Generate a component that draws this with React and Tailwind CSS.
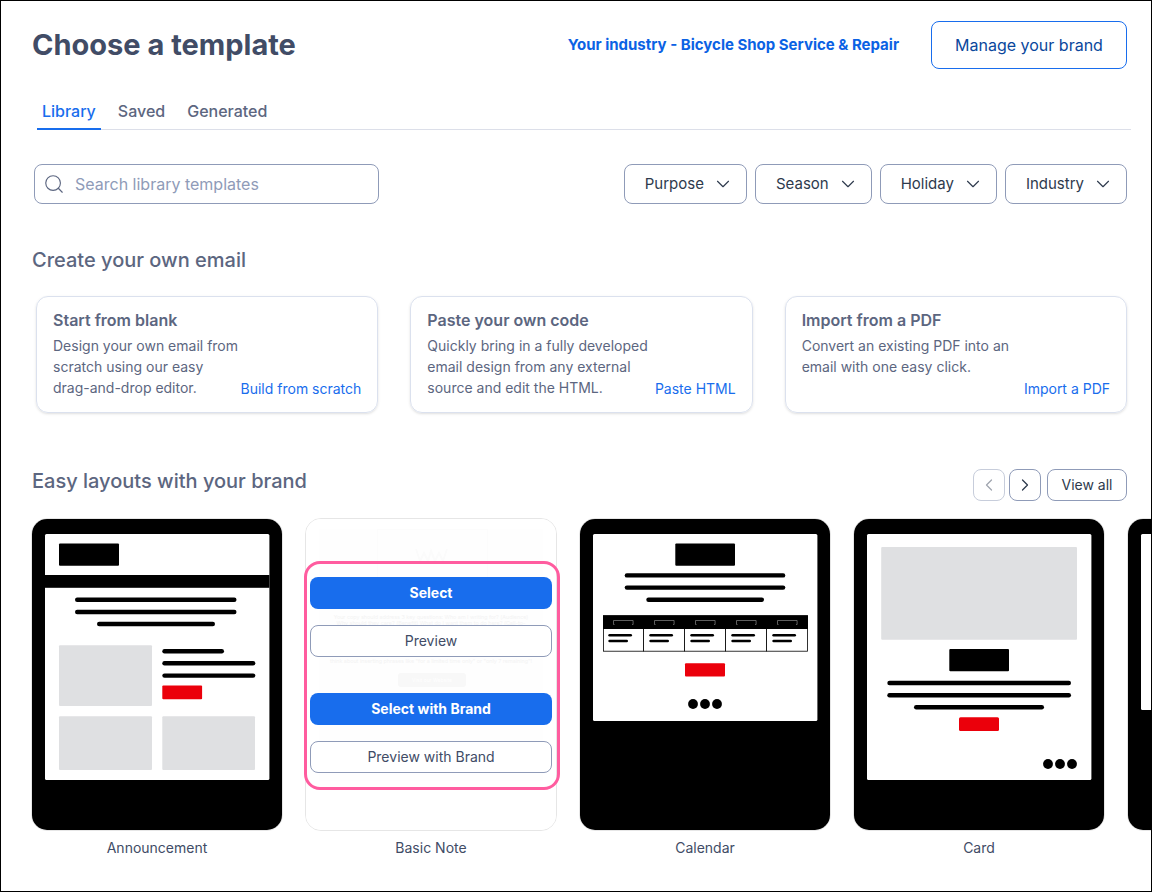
import React from 'react'
import { Search, ChevronDown, ChevronLeft, ChevronRight } from 'lucide-react'

const tabs = ['Library', 'Saved', 'Generated']
const filters = ['Purpose', 'Season', 'Holiday', 'Industry']

const starters = [
  {
    title: 'Start from blank',
    lines: ['Design your own email from', 'scratch using our easy', 'drag-and-drop editor.'],
    action: 'Build from scratch',
  },
  {
    title: 'Paste your own code',
    lines: ['Quickly bring in a fully developed', 'email design from any external', 'source and edit the HTML.'],
    action: 'Paste HTML',
  },
  {
    title: 'Import from a PDF',
    lines: ['Convert an existing PDF into an', 'email with one easy click.'],
    action: 'Import a PDF',
  },
]

const Line = ({ x1, x2, y, w = 4.4 }) => (
  <line x1={x1 + w / 2} x2={x2 - w / 2} y1={y} y2={y} stroke="#000" strokeWidth={w} strokeLinecap="round" />
)

const Frame = ({ bottom, children }) => (
  <svg viewBox="0 0 250 311" className="block w-full h-auto bg-black" aria-hidden="true">
    <rect x="13" y="15" width="224.4" height={bottom - 15} rx="1.5" fill="#fff" />
    {children}
  </svg>
)

const AnnouncementArt = () => (
  <Frame bottom={261}>
    <rect x="27" y="24.4" width="60" height="22.3" rx="1" />
    <rect x="13" y="56" width="224.4" height="12.8" />
    <Line x1={43} x2={204.5} y={80.7} />
    <Line x1={43} x2={204.5} y={93} />
    <Line x1={65} x2={183} y={105} />
    <rect x="27" y="126.3" width="93" height="60.6" rx="1" fill="#dfe0e2" />
    <Line x1={130.3} x2={192} y={132.3} />
    <Line x1={130.3} x2={223.3} y={144.3} />
    <Line x1={130.3} x2={223.3} y={156.6} />
    <rect x="130.3" y="166.6" width="39.8" height="13.6" rx="1" fill="#eb000b" />
    <rect x="27" y="197.3" width="93" height="53.7" rx="1" fill="#dfe0e2" />
    <rect x="130.3" y="197.3" width="92.7" height="53.7" rx="1" fill="#dfe0e2" />
  </Frame>
)

const CalendarArt = () => (
  <Frame bottom={202}>
    <rect x="95.3" y="24.4" width="59.7" height="22.3" rx="1" />
    <Line x1={44.7} x2={205.3} y={56.4} />
    <Line x1={44.7} x2={205.3} y={68.6} />
    <Line x1={66.3} x2={184} y={80.8} />
    <rect x="23.5" y="96.8" width="204" height="35.4" fill="#fff" stroke="#000" strokeWidth="0.8" />
    <rect x="23" y="96.3" width="205" height="13.7" />
    {[0, 41, 82, 123, 164].map(dx => (
      <g key={dx} transform={`translate(${dx} 0)`}>
        <path d="M34.5 105.5h-1v-4h19.6v4h-1" fill="none" stroke="#888" strokeWidth="0.7" />
        {dx > 0 && <path d="M22.5 110v22.4" stroke="#000" strokeWidth="0.9" />}
        <Line x1={28.3} x2={52} y={116.3} w={2.6} />
        <Line x1={28.3} x2={48} y={122} w={2.6} />
      </g>
    ))}
    <rect x="105" y="144.3" width="40" height="13.3" rx="1" fill="#eb000b" />
    <circle cx="113" cy="185" r="4.9" />
    <circle cx="125" cy="185" r="4.9" />
    <circle cx="137" cy="185" r="4.9" />
  </Frame>
)

const CardArt = () => (
  <Frame bottom={261}>
    <rect x="27.2" y="28" width="195.8" height="92.7" rx="1" fill="#dfe0e2" />
    <rect x="95.3" y="130" width="59.7" height="22.3" rx="1" />
    <Line x1={33.3} x2={217} y={164} />
    <Line x1={33.3} x2={217} y={176.3} />
    <Line x1={60} x2={190} y={188.3} />
    <rect x="105" y="198.3" width="40" height="13.6" rx="1.5" fill="#eb000b" />
    <circle cx="194" cy="245" r="4.9" />
    <circle cx="206" cy="245" r="4.9" />
    <circle cx="218" cy="245" r="4.9" />
  </Frame>
)

// Washed out while the action overlay is open
const NoteArt = () => (
  <svg viewBox="0 0 250 311" className="block w-full h-auto bg-white" aria-hidden="true">
    <rect x="13" y="10" width="224" height="252" fill="#fefefe" />
    <rect x="71.5" y="10.5" width="110" height="60" fill="none" stroke="#fcfcfc" />
    <path d="M110 30l4 12 4-8 4 8 3-10 4 10 4-8 4 8 4-12" fill="none" stroke="#fbfbfb" strokeWidth="2" />
    <g fill="#f3f3f3" fontSize="5.4" textAnchor="middle">
      <text x="125" y="99.5">Your copy should address 3 key questions: Who am I writing for? (Audience)</text>
      <text x="125" y="106">Why should they care? (Benefit) What do I want them to do here? (Call-to-</text>
      <text x="125" y="144">think about inserting phrases like "for a limited time only" or "only 7 remaining"!</text>
    </g>
    <rect x="92" y="154" width="68" height="14" rx="3" fill="#f8f8f8" />
    <text x="126" y="163" fill="#fff" fontSize="5" textAnchor="middle">Visit our Website</text>
  </svg>
)

const ghost = 'block h-8 w-full rounded-lg border border-[#8f9bb8] bg-white text-sm text-[#414c66]'
const solid = 'block h-8 w-full rounded-lg bg-[#186ded] text-sm font-bold text-white'

const templates = [
  { name: 'Announcement', art: <AnnouncementArt /> },
  { name: 'Basic Note', art: <NoteArt />, open: true },
  { name: 'Calendar', art: <CalendarArt /> },
  { name: 'Card', art: <CardArt /> },
  { name: '', art: <Frame bottom={191} /> },
]

const TemplateActions = () => (
  <>
    <div className="absolute inset-x-[5px] top-[59px] flex flex-col gap-4">
      <button className={solid}>Select</button>
      <button className={ghost}>Preview</button>
      <button className={`${solid} mt-5`}>Select with Brand</button>
      <button className={ghost}>Preview with Brand</button>
    </div>
    <div className="pointer-events-none absolute -left-px -right-[3px] top-[43px] h-[229px] rounded-2xl border-3 border-[#ff5c9f]" />
  </>
)

export default function App() {
  return (
    <main className="min-h-screen overflow-hidden border border-black bg-white pl-[31px] pr-6 pt-5 font-['Inter',sans-serif] text-[#5c6680]">
      <header className="flex h-12 items-center">
        <h1 className="flex-1 text-[29px] font-bold text-[#414c66]">Choose a template</h1>
        <a href="#industry" className="mr-8 text-[15px] font-bold text-[#0b62e4]">
          Your industry - Bicycle Shop Service &amp; Repair
        </a>
        <button className="h-12 w-49 rounded-lg border border-[#186ded] text-base text-[#0a479c]">
          Manage your brand
        </button>
      </header>

      {/* Tabs */}
      <nav className="-mr-1 ml-[5px] mt-[25px] flex gap-3 border-b border-[#dcdfe9]">
        {tabs.map((tab, i) => (
          <button
            key={tab}
            className={`-mb-px h-9 border-b-2 px-[5px] text-base font-medium ${
              i === 0 ? 'border-[#186ded] text-[#186ded]' : 'border-transparent'
            }`}
          >
            {tab}
          </button>
        ))}
      </nav>

      {/* Search and filters */}
      <div className="mt-[34px] flex items-center justify-between pl-0.5">
        <label className="flex h-10 w-[345px] items-center gap-2.5 rounded-lg border border-[#8f9bb8] pl-2">
          <Search size={22} strokeWidth={1.25} />
          <input
            type="search"
            aria-label="Search library templates"
            placeholder="Search library templates"
            className="min-w-0 flex-1 text-base outline-none placeholder:text-[#8f9bb8]"
          />
        </label>
        <div className="flex gap-2">
          {filters.map(name => (
            <button
              key={name}
              className="flex h-10 items-center gap-2 rounded-lg border border-[#8f9bb8] pl-5 pr-3 text-[15px] text-[#2e3a4d]"
            >
              {name}
              <ChevronDown size={22} strokeWidth={1.25} />
            </button>
          ))}
        </div>
      </div>

      {/* Create your own */}
      <h2 className="mt-[42px] text-xl font-medium leading-7">Create your own email</h2>
      <div className="mt-[22px] grid grid-cols-3 gap-8 pl-1">
        {starters.map(({ title, lines, action }) => (
          <article
            key={title}
            className="flex h-[117px] flex-col rounded-xl border border-[#dbe1ee] px-4 pt-[11px] shadow-sm"
          >
            <h3 className="text-base font-semibold leading-6">{title}</h3>
            <div className="mt-[3px] flex flex-1 justify-between">
              <p className="text-sm leading-[21px]">
                {lines.map(line => (
                  <span key={line} className="block whitespace-nowrap">{line}</span>
                ))}
              </p>
              <a href="#create" className="mb-[13px] self-end whitespace-nowrap text-sm text-[#186ded]">{action}</a>
            </div>
          </article>
        ))}
      </div>

      {/* Layout carousel */}
      <div className="mt-14 flex h-8 items-center gap-1">
        <h2 className="flex-1 pb-2 text-xl font-medium leading-7">Easy layouts with your brand</h2>
        <button disabled aria-label="Previous" className="flex size-8 items-center justify-center rounded-lg border border-[#c7cddb] text-[#a0a5af]">
          <ChevronLeft size={20} strokeWidth={1.5} />
        </button>
        <button aria-label="Next" className="flex size-8 items-center justify-center rounded-lg border border-[#8f9bb8] text-[#2e3a4d]">
          <ChevronRight size={20} strokeWidth={1.5} />
        </button>
        <button className="ml-0.5 h-8 w-20 rounded-lg border border-[#8f9bb8] text-sm text-[#2e3a4d]">View all</button>
      </div>
      <div className="-ml-px -mr-6 mt-[17px] flex gap-[22px]">
        {templates.map(({ name, art, open }) => (
          <figure key={name} className="w-[252px] shrink-0">
            <div className="relative">
              <div className="overflow-hidden rounded-2xl border border-[#e6e6e6]">{art}</div>
              {open && <TemplateActions />}
            </div>
            <figcaption className="mt-[7px] text-center text-sm text-[#414c66]">{name}</figcaption>
          </figure>
        ))}
      </div>
    </main>
  )
}
